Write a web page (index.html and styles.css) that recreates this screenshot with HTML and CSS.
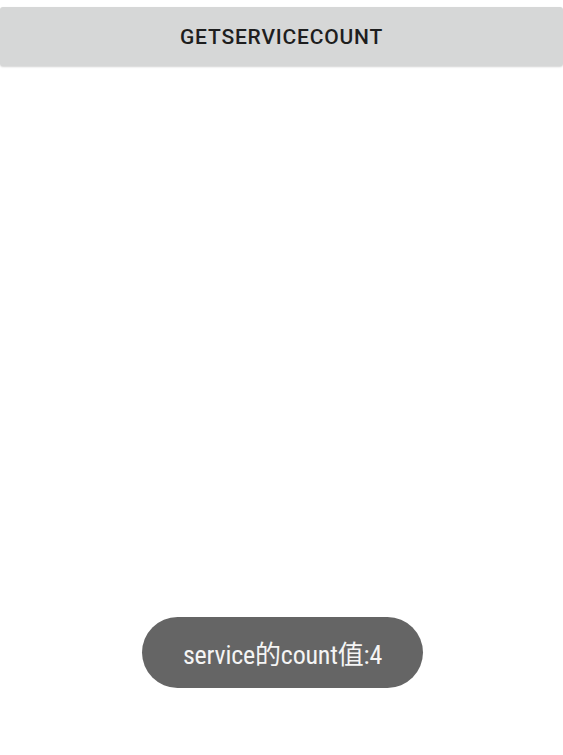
FILE: index.html
```html
<!DOCTYPE html>
<html>
<head>
<meta charset="utf-8">
<link rel="stylesheet" href="styles.css">
</head>
<body>
<div class="screen">
  <button class="btn">GETSERVICECOUNT</button>
  <div class="toast">service的count值:4</div>
</div>
</body>
</html>
```
FILE: styles.css
```css
html, body {
  margin: 0;
  padding: 0;
  background: #ffffff;
}
.screen {
  width: 563px;
  height: 755px;
  position: relative;
  padding-top: 7px;
  box-sizing: border-box;
  font-family: Roboto, "Noto Sans CJK SC", sans-serif;
}
.btn {
  display: block;
  width: 563px;
  height: 59px;
  margin: 0;
  border: none;
  border-radius: 3px;
  background: #d6d7d7;
  box-shadow: 0 1px 2px rgba(0,0,0,0.18);
  font-family: Roboto, sans-serif;
  font-weight: 500;
  font-size: 21px;
  color: #1e1e1e;
  letter-spacing: 0.8px;
  padding: 0;
}
.toast {
  position: absolute;
  left: 142px;
  top: 617px;
  width: 281px;
  height: 71px;
  border-radius: 36px;
  background: #656565;
  color: #f4f4f4;
  display: flex;
  align-items: center;
  justify-content: center;
  font-size: 26px;
  font-stretch: condensed;
  letter-spacing: -0.2px;
}
```
